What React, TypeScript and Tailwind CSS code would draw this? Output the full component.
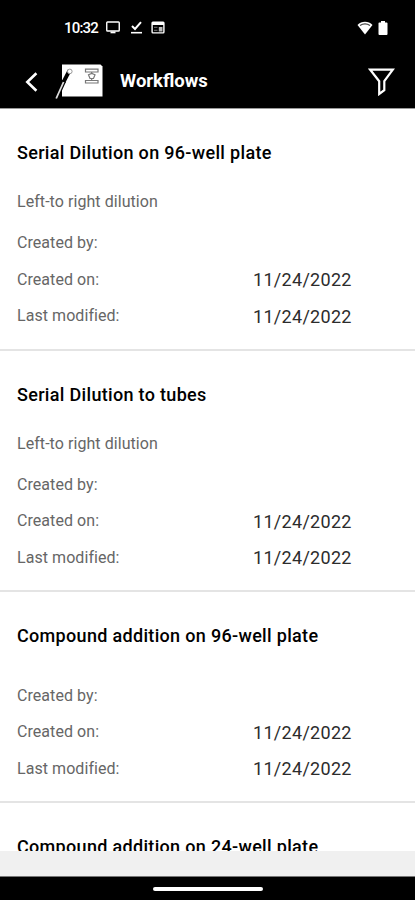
type Workflow = {
  title: string;
  description?: string;
  createdBy?: string;
  createdOn: string;
  lastModified: string;
};

const WORKFLOWS: Workflow[] = [
  {
    title: "Serial Dilution on 96-well plate",
    description: "Left-to right dilution",
    createdOn: "11/24/2022",
    lastModified: "11/24/2022",
  },
  {
    title: "Serial Dilution to tubes",
    description: "Left-to right dilution",
    createdOn: "11/24/2022",
    lastModified: "11/24/2022",
  },
  {
    title: "Compound addition on 96-well plate",
    createdOn: "11/24/2022",
    lastModified: "11/24/2022",
  },
  {
    title: "Compound addition on 24-well plate",
    createdOn: "11/24/2022",
    lastModified: "11/24/2022",
  },
];

function StatusBar() {
  return (
    <div className="flex h-[55px] items-center pl-16 pr-[27px] text-white">
      <span className="w-[42px] text-[15px] leading-5 font-medium tracking-[-0.8px] whitespace-nowrap">
        10:32
      </span>
      <svg width="14" height="13" viewBox="0 0 14 13" fill="none">
        <rect x="0.75" y="1" width="12.5" height="9" rx="0.8" stroke="#fff" strokeWidth="1.4" />
        <path d="M4.5 10.5h5v1.8h-5z" fill="#fff" />
      </svg>
      <svg className="ml-[9.5px]" width="13" height="13" viewBox="0 0 13 13" fill="none">
        <path d="M2 5L5 8L11 1.2" stroke="#fff" strokeWidth="2" />
        <path d="M1 11.7H12" stroke="#fff" strokeWidth="1.6" />
      </svg>
      <svg className="ml-[8.5px]" width="14" height="13" viewBox="0 0 14 13" fill="none">
        <rect x="1.1" y="1.1" width="11.8" height="10.8" rx="0.8" stroke="#fff" strokeWidth="1.4" />
        <path d="M1 1h12v3H1z" fill="#fff" />
        <path d="M3 6.3h3.5M3 9.3h3.5" stroke="#777" />
        <path d="M7.8 6h3.7v4.5H7.8z" fill="#bbb" />
      </svg>
      <svg className="ml-auto" width="16" height="14" viewBox="0 0 16 14" fill="none">
        <path d="M0.5 4C4.5 -0.2 11.5 -0.2 15.5 4L8 13.5Z" fill="#fff" />
        <path d="M3 4.4Q8 1.2 13 4.4" stroke="#444" strokeWidth="1.2" />
      </svg>
      <svg className="ml-[5px]" width="10" height="14" viewBox="0 0 10 14">
        <path d="M3 0h4v1.4h1.6q.9 0 .9.9v10.8q0 .9-.9.9H1.4q-.9 0-.9-.9V2.3q0-.9.9-.9H3z" fill="#fff" />
      </svg>
    </div>
  );
}

function WorkflowLogo() {
  return (
    <svg className="ml-[17px]" width="48" height="36" viewBox="0 0 48 36" fill="none">
      <path d="M7 0.5h38.5L47.5 2.5v30H7z" fill="#fff" />
      <path d="M14.5 6.5L8.5 18" stroke="#000" strokeWidth="3.8" />
      <path d="M9 17L1.2 34" stroke="#000" strokeWidth="4.2" />
      <path d="M8.6 18L1.2 34.5" stroke="#ddd" strokeWidth="1.8" />
      <circle cx="14.8" cy="7.4" r="2.3" fill="#fff" stroke="#999" />
      <g stroke="#777" strokeWidth="1.2">
        <path d="M30.5 8V5.2h12.5v2.8H30.5zM30.5 16.5h12.5v2.5H30.5zM36.7 8v2M36.7 14.5v2" />
        <path d="M33.5 10.8L36.7 9.5L40 10.8L38.5 14.5H35Z" />
      </g>
    </svg>
  );
}

function Header() {
  return (
    <header className="flex h-[53px] items-center pl-[25px] pr-[20px] text-white">
      <svg width="13" height="20" viewBox="0 0 13 20" fill="none">
        <path d="M11.4 1.2L2.3 10L11.4 18.8" stroke="#fff" strokeWidth="2.6" />
      </svg>
      <WorkflowLogo />
      <h1 className="ml-[17px] text-[18.5px] font-bold">Workflows</h1>
      <svg className="ml-auto" width="27" height="28" viewBox="0 0 27 28" fill="none">
        <path
          d="M2.2 1.7H24.8L16.3 13.2V22.2L11.2 26V13.2Z"
          stroke="#fff"
          strokeWidth="2.2"
        />
      </svg>
    </header>
  );
}

function Field({ label, value }: { label: string; value?: string }) {
  return (
    <div className="flex h-[36.5px] items-center">
      <dt className="w-[236px] text-[16px] tracking-[0.06px] text-[#666]">{label}</dt>
      <dd className="text-[18px] tracking-[0.3px] text-[#2c2c2c]">{value}</dd>
    </div>
  );
}

function WorkflowItem({ workflow }: { workflow: Workflow }) {
  return (
    <li className="shrink-0 border-b-2 border-[#e4e4e4] px-[17px] pt-[30px] pb-[14px]">
      <h2 className="text-[18px] leading-7 font-medium tracking-[0.32px] text-black">
        {workflow.title}
      </h2>
      {workflow.description && (
        <p className="mt-[25px] -mb-[14.5px] text-[16px] leading-5 tracking-[0.06px] text-[#666]">
          {workflow.description}
        </p>
      )}
      <dl className="mt-[27.5px]">
        <Field label="Created by:" value={workflow.createdBy} />
        <Field label="Created on:" value={workflow.createdOn} />
        <Field label="Last modified:" value={workflow.lastModified} />
      </dl>
    </li>
  );
}

export default function App() {
  return (
    <div className="flex h-[900px] w-[415px] flex-col overflow-hidden bg-black font-[Roboto,sans-serif]">
      <StatusBar />
      <Header />
      <ul className="flex min-h-0 flex-1 flex-col overflow-hidden border-t border-[#999] bg-white">
        {WORKFLOWS.map((workflow) => (
          <WorkflowItem key={workflow.title} workflow={workflow} />
        ))}
      </ul>
      <div className="h-[26px] border-b border-[#777] bg-[#f0f0f0]" />
      <div className="flex h-[23px] items-center justify-center">
        <div className="h-1 w-[110px] rounded-full bg-white" />
      </div>
    </div>
  );
}
